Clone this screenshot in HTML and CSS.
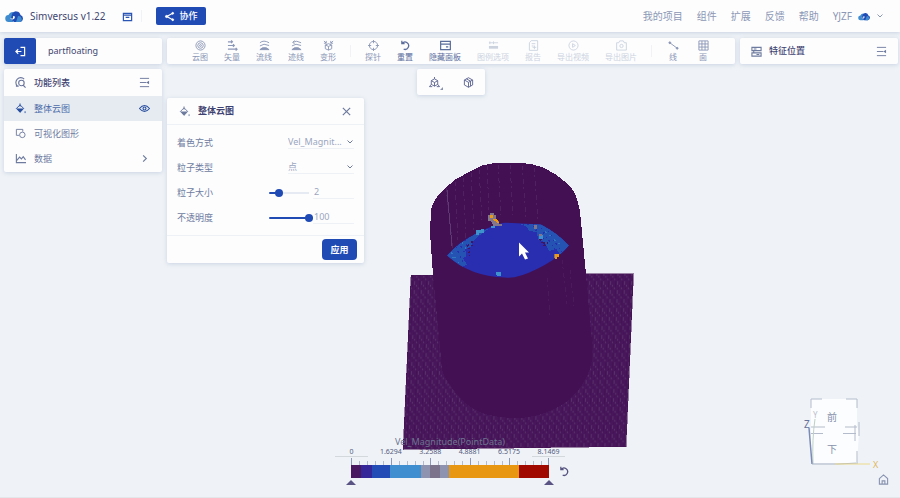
FILE: index.html
```html
<!DOCTYPE html>
<html lang="zh-CN">
<head>
    <meta charset="UTF-8">
    <meta name="viewport" content="width=device-width, initial-scale=1.0">
    <title>Simversus</title>
    <link rel="stylesheet" href="styles.css">
</head>
<body>
    <svg width="0" height="0" class="defs">
        <symbol id="cloud" viewBox="0 0 18 13">
            <path d="M4 12a3.500 3.500 0 0 1-.5-7A5 5 0 0 1 8 2l3 4-3 6z" fill="#3f8bd0"/>
            <path d="M7 4a4.500 4.500 0 0 1 8.500 1 3.600 3.600 0 0 1-1 7H9l-3-3z" fill="#214bb4"/>
            <path d="M13 6a3.200 3.200 0 0 1 2 6h-4z" fill="#3f8bd0"/>
            <path d="M5 8.500h3V6l2 .5c0 3-3 4-5 2z" fill="#fff"/>
        </symbol>
        <symbol id="bucket" viewBox="0 0 12 12">
            <path d="M1.500 6 5.500 2l4 4-4 4z" fill="none" stroke="currentColor"/>
            <path d="M1.500 6h8l-4 4.500z" fill="currentColor"/>
            <path d="M5.500 4V.5M11 9v2" stroke="currentColor"/>
        </symbol>
        <symbol id="fold" viewBox="0 0 12 12">
            <path d="M1 1.500h10M1 6h7M1 10.500h10" stroke="currentColor" fill="none"/>
            <path d="M11 4v4L8 6z" fill="currentColor"/>
        </symbol>
        <symbol id="down" viewBox="0 0 8 8">
            <path d="M1.500 2.500 4 5l2.500-2.500" stroke="currentColor" fill="none"/>
        </symbol>
        <symbol id="undo" viewBox="0 0 12 12">
            <path d="M2.500 3.500A4 4 0 1 1 4 10M2 .8v3h3" stroke="currentColor" stroke-width="1.400" fill="none"/>
        </symbol>
    </svg>

    <header class="topbar">
        <svg class="logo"><use href="#cloud"/></svg>
        <h1>Simversus v1.22</h1>
        <button class="save" aria-label="保存">
            <svg class="icon" viewBox="0 0 12 12" fill="none" stroke="currentColor" stroke-width="1.300"><path d="M1.500 4.500h9v6h-9zM1.500 4.500v-2h9v2M4 7h4"/></svg>
        </button>
        <span class="split"></span>
        <button class="share">
            <svg class="icon" viewBox="0 0 12 12" fill="currentColor" stroke="currentColor"><path d="M9.500 2.500 3 6l6.500 3.500" fill="none" stroke-width="1.300"/><circle cx="9.500" cy="2.500" r="1"/><circle cx="2.800" cy="6" r="1.200"/><circle cx="9.500" cy="9.500" r="1"/></svg>
            协作
        </button>
        <nav class="menu">
            <a href="#">我的项目</a>
            <a href="#">组件</a>
            <a href="#">扩展</a>
            <a href="#">反馈</a>
            <a href="#">帮助</a>
            <a href="#" class="user">YJZF
                <svg class="avatar"><use href="#cloud"/></svg>
                <svg class="caret"><use href="#down"/></svg>
            </a>
        </nav>
    </header>

    <main class="workspace">
        <!-- particle view -->
        <svg class="scene" viewBox="0 32 900 466" preserveAspectRatio="xMidYMid slice" shape-rendering="crispEdges">
            <defs>
                <pattern id="grain" width="7" height="9" patternUnits="userSpaceOnUse" patternTransform="skewX(-2)">
                    <rect width="7" height="9" fill="#48175b"/>
                    <path d="M1 0v2M4 3v3M6 6v2" stroke="#573069"/>
                    <path d="M2 3v6M5 0v2" stroke="#421255"/>
                </pattern>
                <clipPath id="pool">
                    <path d="M447 256Q458 243 476 234T505 223L541 225Q557 233 569 246Q560 258 538 269T505 278Q470 277 447 256z"/>
                </clipPath>
            </defs>
            <path d="M411 276 633.500 274 626 447 403 450z" fill="url(#grain)" stroke="#42104f" stroke-width=".5"/>
            <path d="M431 210Q434 198 446 188L455 180 470 172 482 166 492 164 523 163.500 533 165 543 168 556 175 567 184Q575 191 577 200L580 212 586 275 588 300 592 343V360Q590 372 585 380 579 392 567 402 556 410 540 415 526 419 513 418.500 499 418 487 415 477 412 467 405 456 396 450 385 444 378 442 370L440 347 433 275 430 233z" fill="#431054"/>
            <g fill="none" stroke="#5c3470" stroke-width=".8" stroke-dasharray="5 3 2 4" opacity=".6">
                <path d="M446 188 453 250M455 182 458 240M463 178 466 238M471 173 474 230M479 170 482 220M487 166 489 210M498 165 501 215M510 165 513 215M522 166 526 218M534 168 538 222"/>
                <path d="M447 190 452 246" stroke="#7d668c" stroke-dasharray="none"/>
                <path d="M547 278 550 315M562 260 567 304M570 270 574 306" opacity=".6"/>
            </g>
            <g clip-path="url(#pool)">
                <path d="M440 220h135v60H440z" fill="#292db0"/>
                <path d="M447 256Q458 243 480 232L489 229 478 237 473 242 471 247 465 250 467 256 463 259 467 265 461 268z" fill="#2453b4"/>
                <path d="M519 224 541 225Q557 233 569 246L560 255 556 249 549 252 545 243 538 240 537 233 529 231 526 227z" fill="#2453b4"/>
                <path d="M456 248 463 262M459 243 470 262M465 241 471 256M541 229 555 250M548 232 562 252M533 227 544 240M523 225h14" stroke="#292db0" stroke-width="1.500" stroke-dasharray="1 3 2 4" fill="none"/>
                <path d="M451 253 459 263M462 243 466 250M545 232 560 245M452 258h6" stroke="#3078c0" stroke-width="1.500" stroke-dasharray="2 4 1 5" fill="none"/>
                <path d="M468 245 470 256M472 241v6M540 239 546 248M543 243h5" stroke="#40145e" stroke-width="2" stroke-dasharray="2 2 1 2" fill="none"/>
            </g>
            <path d="M476 230h5v-1h3v4h-5v2h-3zM496 272h5v4h-4v-1h-1zM539 235h4v4h-4zM491 226h4v2h-4z" fill="#3f91ce"/>
            <path d="M488 215h2v-2h4v2h2v4l3 3v2h3v2h-9l-2-5h-3zM534 225h3v4h-3zM539 234h3v2h-3zM554 254h3v4h-3z" fill="#81768c"/>
            <path d="M490 215h3v3h-3zM492 219h4l3 4h-2l-4-3zM555 254h4v3h-2v2h-2z" fill="#ee990e"/>
            <path d="M519 243v14l3-3 3 6 3-1-3-6h4z" fill="#fff" shape-rendering="auto"/>
        </svg>

        <div class="columns">
            <aside class="side">
                <div class="panel project">
                    <button class="exit" aria-label="退出">
                        <svg class="icon" viewBox="0 0 12 12" fill="none" stroke="currentColor" stroke-width="1.300"><path d="M6 1.500h4.500v9H6M1 6h6M3.500 3.500 1 6l2.500 2.500"/></svg>
                    </button>
                    <span>partfloating</span>
                </div>
                <div class="panel functions">
                    <div class="row head">
                        <svg class="icon" viewBox="0 0 12 12" fill="none" stroke="currentColor" stroke-width="1.200"><circle cx="7" cy="6.500" r="3"/><path d="m9 9 2.500 2.500M10 2.200a5 5 0 1 0-7.500 7.500M1 10h3"/></svg>
                        <h2>功能列表</h2>
                        <svg class="icon end"><use href="#fold"/></svg>
                    </div>
                    <a href="#" class="row active">
                        <svg class="icon"><use href="#bucket"/></svg>
                        整体云图
                        <svg class="icon end" viewBox="0 0 12 12" fill="none" stroke="currentColor" stroke-width="1.200"><path d="M.5 6Q6-.5 11.500 6 6 12.500.5 6z"/><circle cx="6" cy="6" r="1.600"/></svg>
                    </a>
                    <a href="#" class="row">
                        <svg class="icon" viewBox="0 0 12 12" fill="none" stroke="currentColor"><path d="M4.500 8h-3V1.500h7V4"/><circle cx="8" cy="7.500" r="3"/></svg>
                        可视化图形
                    </a>
                    <a href="#" class="row">
                        <svg class="icon" viewBox="0 0 12 12" fill="none" stroke="currentColor" stroke-width="1.200"><path d="M1.500 1v9.500H12M2 8l3-3.500 2 2L9 4l2.500 3.500"/></svg>
                        数据
                        <svg class="icon end" viewBox="0 0 12 12" fill="none" stroke="currentColor" stroke-width="1.200"><path d="m4.500 2.500 3.500 3.500-3.500 3.500"/></svg>
                    </a>
                </div>
            </aside>

            <section class="center">
                <div class="panel toolbar">
                    <button><svg class="icon" viewBox="0 0 12 12" fill="none" stroke="currentColor"><circle cx="6" cy="6" r="5"/><circle cx="6" cy="6" r="3"/><circle cx="6" cy="6" r="1"/></svg>云图</button>
                    <button><svg class="icon" viewBox="0 0 12 12" fill="none" stroke="currentColor" stroke-width="1.200"><path d="M1 2h5M4.500.5 6 2 4.500 3.500M1 6h7M6.500 4.500 8 6 6.500 7.500M1 10h10M9.500 8.500 11 10l-1.500 1.500"/></svg>矢量</button>
                    <button><svg class="icon" viewBox="0 0 12 12" fill="none" stroke="currentColor"><path d="M1 3q4-3.500 10 0M1 6.500Q5 3 11 6"/><path d="M1 10.500q2-3 7-2l3 2z" fill="currentColor"/></svg>流线</button>
                    <button><svg class="icon" viewBox="0 0 12 12" fill="none" stroke="currentColor"><path d="M11 3Q6 0 2 2.500L4 .5M2 2.500l2 2M1 6.500Q5 3 11 6"/><path d="M1 10.500q2-3 7-2l3 2z" fill="currentColor"/></svg>迹线</button>
                    <button><svg class="icon" viewBox="0 0 12 12" fill="none" stroke="currentColor"><path d="M2.500 5.500 6 7l3.500-1.500v4L6 11 2.500 9.500zM6 7v4M2.500 5.500 6 4l3.500 1.500M1 1l2.500 2.500M3.500 1v2.500H1M11 1 8.500 3.500M8.500 1v2.500H11"/></svg>变形</button>
                    <span class="split"></span>
                    <button><svg class="icon" viewBox="0 0 12 12" fill="none" stroke="currentColor"><circle cx="6" cy="6" r="4.500"/><path d="M6 0v3.500M6 8.500V12M0 6h3.500M8.500 6H12"/></svg>探针</button>
                    <button class="on"><svg class="icon"><use href="#undo"/></svg>重置</button>
                    <button class="on"><svg class="icon" viewBox="0 0 12 12" fill="none" stroke="currentColor" stroke-width="1.300"><path d="M.7 1.500h10.600v9H.7zM.7 4.500h10.600M6.500 7.500H9"/></svg>隐藏面板</button>
                    <button disabled><svg class="icon" viewBox="0 0 12 12" fill="none" stroke="currentColor"><path d="M1 3h10M2 1.500v3M6 1.500v3"/><path d="M1 8h10" stroke-width="3"/></svg>图例选项</button>
                    <button disabled><svg class="icon" viewBox="0 0 12 12" fill="none" stroke="currentColor"><path d="M3.500.7h7v10.600h-9V3zM4 4h4M4 6.500h2M7 6v4M5 8h4"/></svg>报告</button>
                    <button disabled><svg class="icon" viewBox="0 0 12 12" fill="none" stroke="currentColor"><circle cx="6" cy="6" r="5"/><path d="M5 4v4l3-2z"/></svg>导出视频</button>
                    <button disabled><svg class="icon" viewBox="0 0 12 12" fill="none" stroke="currentColor"><path d="M.7 3H3l1-2h4l1 2h2.300v8H.7z"/><circle cx="6" cy="6.500" r="1.800"/></svg>导出图片</button>
                    <span class="split"></span>
                    <button><svg class="icon" viewBox="0 0 12 12" fill="currentColor" stroke="currentColor"><path d="m2 3 8 6" fill="none"/><circle cx="2" cy="3" r="1"/><circle cx="10" cy="9" r="1"/></svg>线</button>
                    <button><svg class="icon" viewBox="0 0 12 12" fill="none" stroke="currentColor"><path d="M1 1h10v10H1zM4.300 1v10M7.700 1v10M1 4.300h10M1 7.700h10"/></svg>面</button>
                </div>

                <div class="panel views">
                    <button aria-label="视角">
                        <svg class="icon" viewBox="0 0 12 12" fill="none" stroke="currentColor"><path d="M6 2 9.500 4v4L6 10 2.500 8V4zM2.500 4 6 6l3.500-2M6 6v4M6 0v2M2.500 8 .5 10.500h3M9.500 8l2 2.500h-3"/></svg>
                        <i></i>
                    </button>
                    <button aria-label="立方体">
                        <svg class="icon" viewBox="0 0 12 12" fill="none" stroke="currentColor"><path d="m6 .8 4.500 2.500v5.400L6 11.200 1.500 8.700V3.300zM1.500 3.300 6 5.800l4.500-2.500M6 5.800v5.400M3.700 2 8.200 4.500v5.500"/></svg>
                    </button>
                </div>

                <form class="panel dialog">
                    <div class="dialog-head">
                        <svg class="icon"><use href="#bucket"/></svg>
                        <h2>整体云图</h2>
                        <button type="button" aria-label="关闭">
                            <svg class="icon" viewBox="0 0 12 12" stroke="currentColor" stroke-width="1.300"><path d="m2 2 8 8M10 2l-8 8"/></svg>
                        </button>
                    </div>
                    <div class="fields">
                        <div class="field">
                            <label for="coloring">着色方式</label>
                            <div class="select">
                                <select id="coloring"><option>Vel_Magnit...</option></select>
                                <svg class="caret"><use href="#down"/></svg>
                            </div>
                        </div>
                        <div class="field">
                            <label for="particle">粒子类型</label>
                            <div class="select">
                                <select id="particle"><option>点</option></select>
                                <svg class="caret"><use href="#down"/></svg>
                            </div>
                        </div>
                        <div class="field">
                            <label for="size">粒子大小</label>
                            <input type="range" id="size" min="1" max="7" value="2" style="--fill: 20%">
                            <input type="text" value="2" aria-label="粒子大小">
                        </div>
                        <div class="field">
                            <label for="opacity">不透明度</label>
                            <input type="range" id="opacity" min="0" max="100" value="100" style="--fill: 100%">
                            <input type="text" value="100" aria-label="不透明度">
                        </div>
                    </div>
                    <div class="dialog-foot">
                        <button type="button" class="apply">应用</button>
                    </div>
                </form>
            </section>

            <aside class="panel feature">
                <svg class="icon" viewBox="0 0 12 12" fill="none" stroke="currentColor" stroke-width="1.200"><path d="M1 1.500h10v3.500H1zM1 7.500h10V11H1zM3 3.200h3M6 9.200h3M3 5v2.500"/></svg>
                <h2>特征位置</h2>
                <svg class="icon end"><use href="#fold"/></svg>
            </aside>
        </div>

        <!-- colour legend -->
        <div class="legend">
            <p class="legend-title">Vel_Magnitude(PointData)</p>
            <div class="scale">
                <div class="labels">
                    <span class="edge">0</span><span>1.6294</span><span>3.2588</span><span>4.8881</span><span>6.5175</span><span class="edge">8.1469</span>
                </div>
                <svg class="bar" viewBox="0 0 198 30" shape-rendering="crispEdges">
                    <path d="M.5 1v7M40 1v7M79.500 1v7M119 1v7M158.500 1v7M197.500 1v7" stroke="#8c98b8"/>
                    <path d="M8 4v4M16 4v4M24 4v4M32 4v4M48 4v4M56 4v4M64 4v4M72 4v4M87 4v4M95 4v4M103 4v4M111 4v4M127 4v4M135 4v4M143 4v4M151 4v4M166 4v4M174 4v4M182 4v4M190 4v4" stroke="#b3bccd"/>
                    <path d="M0 8h10v13H0z" fill="#4a1761"/>
                    <path d="M10 8h11v13H10z" fill="#35269a"/>
                    <path d="M21 8h18v13H21z" fill="#244cb6"/>
                    <path d="M39 8h31v13H39z" fill="#3f8ed0"/>
                    <path d="M70 8h9v13h-9zM89 8h9v13h-9z" fill="#8e94b0"/>
                    <path d="M79 8h10v13H79z" fill="#7b728c"/>
                    <path d="M98 8h70v13H98z" fill="#e89713"/>
                    <path d="M168 8h30v13h-30z" fill="#a00900"/>
                </svg>
                <div class="handles"><i></i><i></i></div>
                <button class="reset" aria-label="重置图例"><svg class="icon"><use href="#undo"/></svg></button>
            </div>
        </div>

        <div class="compass">
            <svg viewBox="0 0 84 80" fill="none">
                <path d="M9 5h46v27l2 6-2 31H9z" fill="#fcfdfe"/>
                <path d="M9 14V5h11M44 5h11v9M9 39.500h12M41 39.500h13M9 33h14M43 33h12M53 31v16M57 28v14M55 57v11" stroke="#b4bccb"/>
                <path d="M11 70Q10 45 13 25" stroke="#bfd0c8"/>
                <path d="M10 70 7 34" stroke="#7b8bb8" stroke-width="1.500"/>
                <path d="M10 70h26l20-1" stroke="#a9b3c4"/>
                <path d="M33 70h35" stroke="#ecd98a"/>
                <text x="2" y="34" fill="#66719c" font-size="10">Z</text>
                <text x="11" y="24" fill="#b9c0cc" font-size="8">Y</text>
                <text x="71" y="74" fill="#dfb75c" font-size="9">X</text>
                <text x="25" y="27" fill="#8791ab" font-size="10">前</text>
                <text x="25" y="59" fill="#8791ab" font-size="10">下</text>
            </svg>
            <button aria-label="主视图">
                <svg class="icon" viewBox="0 0 12 12" fill="none" stroke="currentColor" stroke-width="1.200"><path d="M1.500 5 6 1l4.500 4v6h-9zM4.500 11V7.500h3V11"/></svg>
            </button>
        </div>
    </main>
</body>
</html>
```
FILE: styles.css
```css
* {
    box-sizing: border-box;
}
body {
    margin: 0;
    min-height: 100vh;
    display: flex;
    flex-direction: column;
    background-color: #eff3f7;
    font-family: "Noto Sans", "Noto Sans CJK SC", sans-serif;
    font-size: 9px;
    line-height: 12px;
    color: #6e7b9e;
}
h1, h2, p {
    margin: 0;
}
h2 {
    font-size: 9px;
    font-weight: 500;
    color: #3f4270;
}
a {
    color: inherit;
    text-decoration: none;
}
button, input, select {
    margin: 0;
    padding: 0;
    border: none;
    outline: none;
    background: none;
    color: inherit;
    font: inherit;
}
button {
    display: flex;
    align-items: center;
    justify-content: center;
}
.defs {
    position: absolute;
}
.icon {
    width: 11px;
    height: 11px;
    flex: none;
}
.caret {
    width: 8px;
    height: 8px;
    flex: none;
}
.end {
    margin-left: auto;
}
.split {
    width: 1px;
    height: 12px;
    background-color: #f0f2f6;
}
.panel {
    background-color: #fdfdfe;
    border-radius: 2px;
    box-shadow: 0 1px 4px rgba(90, 120, 170, 0.25);
}

/* header */
.topbar {
    display: flex;
    align-items: center;
    height: 32px;
    padding: 0 16px 0 5px;
    background-color: #fdfdfe;
    box-shadow: 0 1px 4px rgba(90, 120, 170, 0.25);
    position: relative;
    z-index: 3;
}
.logo {
    width: 18px;
    height: 13px;
}
.topbar h1 {
    margin-left: 7px;
    font-size: 10px;
    font-weight: 400;
    color: #3f4670;
}
.save {
    margin: 0 8px 0 16px;
    color: #2a55b5;
}
.share {
    width: 50px;
    height: 18px;
    margin-left: 14px;
    gap: 5px;
    border-radius: 2px;
    background-color: #214bb4;
    color: #fff;
    font-weight: 500;
}
.menu {
    display: flex;
    gap: 14px;
    margin-left: auto;
    font-size: 10px;
    color: #8c98b5;
}
.user {
    display: flex;
    align-items: center;
    gap: 6px;
}
.avatar {
    width: 12px;
    height: 9px;
}

/* workspace */
.workspace {
    flex: 1;
    display: flex;
    flex-direction: column;
    justify-content: space-between;
    position: relative;
    border-bottom: 1px solid #e3e7ea;
}
.scene {
    position: absolute;
    inset: 0;
    width: 100%;
    height: 100%;
    z-index: 1;
    pointer-events: none;
}
.columns {
    display: grid;
    grid-template-columns: 158px 1fr 158px;
    align-items: start;
    gap: 5px;
    padding: 6px 2px 0 4px;
    position: relative;
    z-index: 2;
}
.side, .center {
    display: flex;
    flex-direction: column;
    gap: 5px;
}

/* left side */
.project {
    display: flex;
    align-items: center;
    gap: 12px;
    height: 26px;
    color: #3f4670;
}
.exit {
    width: 32px;
    height: 26px;
    border-radius: 2px;
    background-color: #214bb4;
    color: #fff;
}
.functions {
    padding-bottom: 1px;
}
.row {
    display: flex;
    align-items: center;
    gap: 8px;
    height: 25px;
    padding: 0 12px 0 11px;
}
.row.head {
    height: 27px;
    color: #69749a;
}
.row.active {
    background-color: #e6ebf2;
    color: #4c6ba8;
}
.row.active .icon {
    color: #294f9f;
}

/* toolbar */
.toolbar {
    display: flex;
    align-items: center;
    justify-content: center;
    gap: 16px;
    height: 26px;
    font-size: 8px;
    line-height: 10px;
    color: #8b97b6;
}
.toolbar button {
    flex-direction: column;
    gap: 1px;
    min-width: 14px;
    white-space: nowrap;
}
.toolbar .on {
    color: #5a6c9c;
}
.toolbar button:disabled {
    color: #ccd3df;
}
.toolbar .split {
    margin: 0 -2px;
}
.views {
    display: flex;
    align-self: center;
    height: 26px;
    color: #5c6490;
}
.views button {
    width: 34px;
    position: relative;
}
.views i {
    position: absolute;
    right: 8px;
    bottom: 5px;
    border-left: 3px solid transparent;
    border-bottom: 3px solid #8a93b0;
}

/* dialog */
.dialog {
    align-self: flex-start;
    width: 197px;
    margin-top: -2px;
}
.dialog-head {
    display: flex;
    align-items: center;
    gap: 8px;
    height: 27px;
    padding: 0 12px;
    border-bottom: 1px solid #eef1f5;
}
.dialog-head h2 {
    flex: 1;
    font-weight: 700;
}
.fields {
    padding: 5px 10px;
}
.field {
    display: flex;
    align-items: center;
    height: 25px;
}
.field label {
    flex: 1;
}
.select {
    display: flex;
    align-items: center;
    width: 66px;
    border-bottom: 1px solid #eef1f5;
}
.select select {
    flex: 1;
    min-width: 0;
    appearance: none;
    color: #9ba6bf;
}
.field input[type="text"] {
    width: 41px;
    padding-left: 1px;
    border-bottom: 1px solid #eef1f5;
    color: #9ba6bf;
}
.field input[type="range"] {
    appearance: none;
    width: 44px;
    height: 8px;
}
.field input[type="range"]::-webkit-slider-runnable-track {
    height: 2px;
    border-radius: 1px;
    background: linear-gradient(to right, #214bb4 var(--fill), #e6eaf2 var(--fill) 90%, transparent 90%);
}
.field input[type="range"]::-webkit-slider-thumb {
    appearance: none;
    width: 8px;
    height: 8px;
    margin-top: -3px;
    border-radius: 50%;
    background-color: #214bb4;
}
.dialog-foot {
    display: flex;
    justify-content: flex-end;
    padding: 3px 7px;
    border-top: 1px solid #eef1f5;
}
.apply {
    width: 35px;
    height: 21px;
    border-radius: 4px;
    background-color: #214bb4;
    color: #fff;
    font-weight: 700;
}

/* right side */
.feature {
    display: flex;
    align-items: center;
    gap: 7px;
    height: 26px;
    padding: 0 11px;
}

/* legend */
.legend {
    align-self: center;
    text-align: center;
    padding-bottom: 12px;
}
.legend-title {
    position: relative;
    z-index: 2;
    color: #6d7590;
}
.scale {
    position: relative;
    width: 198px;
    margin: 0 auto;
}
.labels {
    display: flex;
    justify-content: space-between;
    margin: 0 -16px;
    font-size: 7px;
    line-height: 8px;
    color: #555b80;
}
.labels span {
    width: 33px;
}
.labels .edge {
    border-bottom: 1px solid #d3d8dd;
}
.bar {
    display: block;
    width: 198px;
    height: 30px;
    margin-bottom: -7px;
}
.handles {
    display: flex;
    justify-content: space-between;
    margin: 0 -5px;
}
.handles i {
    border: 5px solid transparent;
    border-top: none;
    border-bottom-color: #5a5484;
}
.reset {
    position: absolute;
    left: 208px;
    top: 18px;
    color: #55527f;
}

/* view cube */
.compass {
    position: absolute;
    right: 11px;
    bottom: 12px;
    z-index: 2;
    color: #8892b0;
}
.compass > svg {
    display: block;
    width: 84px;
    height: 80px;
    margin-right: 3px;
}
.compass button {
    margin-left: auto;
}
```
